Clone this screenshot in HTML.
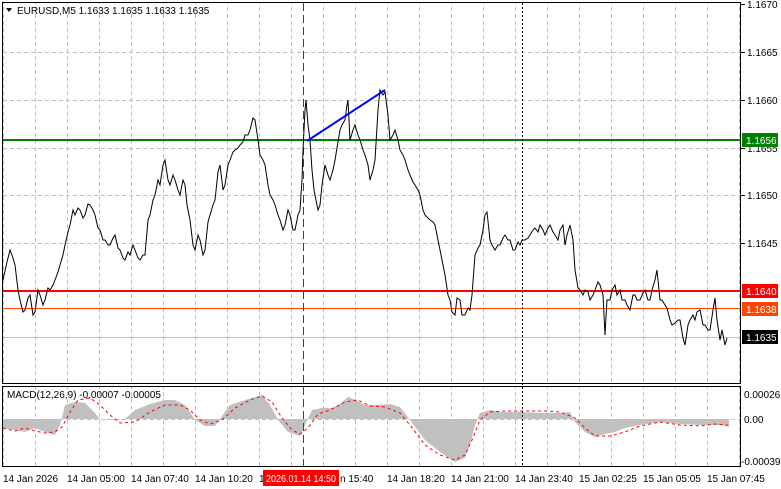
<!DOCTYPE html>
<html><head><meta charset="utf-8"><style>
body{margin:0;background:#fff;width:781px;height:489px;overflow:hidden;font-family:"Liberation Sans",sans-serif;}
svg{display:block}
text{font-family:"Liberation Sans",sans-serif;font-size:10px;fill:#000}
</style></head><body>
<svg width="781" height="489" viewBox="0 0 781 489">
<defs>
<pattern id="vg" x="3" y="0" width="32" height="489" patternUnits="userSpaceOnUse">
<line x1="0.5" y1="0" x2="0.5" y2="489" stroke="#c0c0c0" stroke-dasharray="4,3"/>
</pattern>
</defs>
<rect x="3" y="3" width="737" height="380" fill="url(#vg)"/>
<rect x="3" y="387" width="737" height="79" fill="url(#vg)"/>
<g stroke="#c0c0c0" stroke-dasharray="4,3">
<line x1="3" y1="52.5" x2="740" y2="52.5"/>
<line x1="3" y1="100.5" x2="740" y2="100.5"/>
<line x1="3" y1="148.5" x2="740" y2="148.5"/>
<line x1="3" y1="195.5" x2="740" y2="195.5"/>
<line x1="3" y1="243.5" x2="740" y2="243.5"/>
<line x1="3" y1="291.5" x2="740" y2="291.5"/>
<line x1="3" y1="419.5" x2="740" y2="419.5"/>
</g>
<polygon fill="#c0c0c0" points="3,419 3,428 15,430 25,432 35,428 45,432 55,435 60,425 65,405 75,402 85,403 95,413 100,419 110,420 125,419 135,410 150,404 165,400 175,400 185,405 190,412 195,420 205,426 215,426 220,419 230,405 245,400 255,397 262,395 270,405 278,420 288,432 300,436 305,425 312,410 322,408 332,408 340,404 348,397 356,400 365,405 375,405 390,404 400,407 410,420 425,440 440,452 455,462 465,458 470,445 475,425 480,413 490,410 500,412 520,412 540,413 560,413 570,412 575,422 585,432 595,437 605,434 615,432 625,428 640,425 660,422 680,424 700,425 720,425 729,427 729,419 "/>
<polyline fill="none" stroke="#ff0000" stroke-dasharray="3,3" points="3,428 15,431 25,428 35,431 45,433 55,432 62,427 70,412 78,400 90,398 100,405 110,415 120,423 135,422 150,412 165,405 180,405 190,410 200,420 210,424 222,420 235,408 250,400 262,396 272,402 282,418 292,430 300,434 308,428 318,414 330,410 345,402 358,400 370,406 385,407 400,413 410,425 425,445 440,455 455,460 465,455 472,440 480,420 490,412 505,411 525,411 545,411 560,412 575,418 585,428 595,436 610,436 625,432 640,426 660,422 680,425 700,426 715,424 728,425"/>
<line x1="3" y1="140" x2="740" y2="140" stroke="#008000" stroke-width="2"/>
<line x1="3" y1="291" x2="740" y2="291" stroke="#ff0000" stroke-width="2"/>
<line x1="3" y1="308.5" x2="740" y2="308.5" stroke="#ff4500"/>
<line x1="3" y1="337.5" x2="740" y2="337.5" stroke="#c0c0c0"/>
<line x1="303.5" y1="3" x2="303.5" y2="466" stroke="#404040" stroke-dasharray="8,4"/>
<line x1="303.5" y1="387" x2="303.5" y2="466" stroke="#e00000" stroke-dasharray="8,4"/>
<line x1="522.5" y1="3" x2="522.5" y2="466" stroke="#000" stroke-dasharray="2,2"/>
<polyline fill="none" stroke="#000" stroke-width="1" points="3,280 7,262 10,250 13,258 15,265 18,290 20,300 23,312 25,310 28,298 30,295 33,315 35,312 38,290 40,295 43,305 45,300 48,288 50,290 53,285 55,280 58,272 60,265 63,255 65,245 68,232 70,225 73,210 75,215 78,208 80,210 83,218 85,215 88,204 90,205 93,210 95,215 98,228 100,230 103,240 105,240 108,245 110,245 113,238 115,235 118,248 120,250 123,258 125,260 128,252 130,255 133,245 135,250 138,258 140,260 143,255 145,255 148,220 150,215 153,200 155,195 158,180 160,185 163,165 165,160 168,180 170,185 173,175 175,180 178,190 180,195 183,180 185,185 187,205 190,220 193,245 195,250 198,235 200,240 203,255 205,250 208,222 210,215 213,205 215,200 218,172 220,165 223,190 225,185 228,165 230,160 233,152 235,150 238,148 240,145 243,142 245,135 248,135 250,130 253,118 255,120 258,140 260,155 263,160 265,165 268,185 270,195 273,200 275,205 278,215 280,220 283,230 285,225 288,210 290,215 293,230 295,230 298,215 300,210 302,180 303,150 305,110 306,100 308,125 310,140 312,170 314,190 316,200 318,210 320,205 322,185 325,165 328,175 330,180 333,170 335,160 338,142 340,130 342,125 345,120 347,105 348,100 350,140 353,130 355,125 358,135 360,140 363,150 365,155 368,165 370,180 373,170 375,160 378,110 380,90 383,95 385,92 388,115 390,140 393,135 395,130 398,140 400,150 403,155 405,160 408,170 410,175 413,182 415,185 418,190 420,195 423,210 425,215 428,218 430,220 433,222 435,225 438,240 440,250 443,265 445,275 448,295 450,300 452,312 455,315 457,298 460,300 462,315 465,315 468,308 470,310 472,295 475,255 478,248 480,245 483,230 485,215 487,212 490,240 492,245 495,250 498,245 500,245 503,238 505,235 508,240 510,240 513,250 515,250 518,242 520,245 522,240 525,240 528,238 530,235 533,230 535,228 538,232 540,225 543,230 545,235 548,228 550,225 553,232 555,235 558,240 560,230 563,225 565,245 567,235 570,225 573,240 575,270 578,288 580,290 583,295 585,290 588,292 590,300 593,295 595,290 598,282 600,285 603,295 605,335 607,300 610,300 612,290 615,285 617,295 620,290 622,300 625,300 627,305 630,310 633,295 635,295 637,300 640,300 643,293 645,290 648,300 650,300 652,290 655,280 657,270 660,300 662,300 665,305 667,308 670,320 672,325 675,323 678,320 680,320 683,338 685,345 688,325 690,320 693,315 695,320 697,312 700,310 703,325 705,325 708,330 710,330 713,310 715,298 717,320 720,340 722,330 725,345 727,338"/>
<line x1="307" y1="141" x2="385" y2="90" stroke="#0000ff" stroke-width="2"/>
<rect x="2.5" y="2.5" width="738" height="381" fill="none" stroke="#000"/>
<rect x="2.5" y="386.5" width="738" height="80" fill="none" stroke="#000"/>
<g stroke="#000">
<line x1="741" y1="4.5" x2="745" y2="4.5"/><line x1="741" y1="52.5" x2="745" y2="52.5"/>
<line x1="741" y1="100.5" x2="745" y2="100.5"/><line x1="741" y1="148.5" x2="745" y2="148.5"/>
<line x1="741" y1="195.5" x2="745" y2="195.5"/><line x1="741" y1="243.5" x2="745" y2="243.5"/>
</g>
<text x="747" y="8">1.1670</text>
<text x="747" y="56">1.1665</text>
<text x="747" y="104">1.1660</text>
<text x="747" y="152">1.1655</text>
<text x="747" y="199">1.1650</text>
<text x="747" y="247">1.1645</text>
<rect x="742" y="133" width="36" height="14" fill="#008000"/><text x="746" y="144" style="fill:#fff">1.1656</text>
<rect x="742" y="284" width="36" height="14" fill="#ff0000"/><text x="746" y="295" style="fill:#fff">1.1640</text>
<rect x="742" y="302" width="36" height="14" fill="#ff4500"/><text x="746" y="313" style="fill:#fff">1.1638</text>
<rect x="742" y="330" width="36" height="14" fill="#000"/><text x="746" y="341" style="fill:#fff">1.1635</text>
<text x="744" y="398">0.00026</text>
<text x="744" y="423">0.00</text>
<text x="741" y="465">-0.00039</text>
<polygon points="6,8 12,8 9,12" fill="#000"/>
<text x="17" y="14">EURUSD,M5  1.1633 1.1635 1.1633 1.1635</text>
<text x="7" y="398">MACD(12,26,9) -0.00007 -0.00005</text>
<text x="3" y="482">14 Jan 2026</text>
<text x="67" y="482">14 Jan 05:00</text>
<text x="131" y="482">14 Jan 07:40</text>
<text x="195" y="482">14 Jan 10:20</text>
<text x="259" y="482">1</text>
<text x="340" y="482">n 15:40</text>
<rect x="263" y="470" width="76" height="16" fill="#ff0000"/>
<text x="266" y="482" textLength="70" lengthAdjust="spacingAndGlyphs" style="fill:#fff">2026.01.14 14:50</text>
<text x="387" y="482">14 Jan 18:20</text>
<text x="451" y="482">14 Jan 21:00</text>
<text x="515" y="482">14 Jan 23:40</text>
<text x="579" y="482">15 Jan 02:25</text>
<text x="643" y="482">15 Jan 05:05</text>
<text x="707" y="482">15 Jan 07:45</text>
</svg>
</body></html>
